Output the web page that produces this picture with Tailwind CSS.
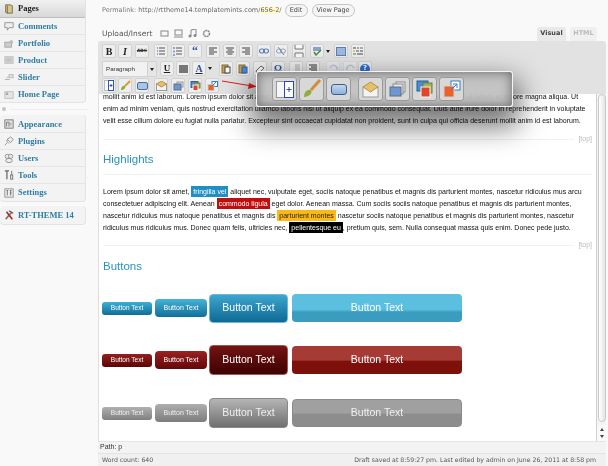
<!DOCTYPE html>
<html lang="en">

<head>
    <meta charset="UTF-8">
    <meta name="viewport" content="width=device-width, initial-scale=1.0">
    <title>Edit Page</title>
    <script src="https://cdn.jsdelivr.net/npm/@tailwindcss/browser@4"></script>
</head>

<body class="m-0 overflow-hidden bg-[#f9f9f9]">
    <div class="relative flex h-[466px] w-[608px] overflow-hidden bg-[#f9f9f9] blur-[0.4px]">

        <!-- sidebar -->
        <aside class="w-[98px] shrink-0 font-['Liberation_Serif',serif] text-[8.500px] font-bold whitespace-nowrap text-[#2f7ea3]">
            <ul class="h-[103px] w-[86px] rounded-br-[4px] border-r border-b border-[#e3e3e3] bg-[#f3f3f3]">
                <li class="flex h-[18px] items-center border-b border-[#bdbdbd] bg-linear-to-b from-[#f1f1f1] to-[#d8d8d8] text-[#222222]">
                    <svg class="mx-[4px] h-[10px] w-[10px]" viewBox="0 0 12 12"><path d="M2 1h5l3 1v9H4L2 10z" fill="#d8c58c" stroke="#6b6246"/><path d="M4 2v9" stroke="#6b6246"/></svg>Pages</li>
                <li class="flex h-[17px] items-center border-b border-[#e6e6e6]">
                    <svg class="mx-[4px] h-[10px] w-[10px]" viewBox="0 0 12 12"><path d="M1 2h10v6H6l-2 3V8H1z" fill="#eeeeee" stroke="#8a8a8a"/></svg>Comments</li>
                <li class="flex h-[17px] items-center border-b border-[#e6e6e6]">
                    <svg class="mx-[4px] h-[10px] w-[10px]" viewBox="0 0 12 12"><rect x="1" y="5" width="8" height="6" fill="#cccccc" stroke="#a0a0a0"/><path d="M6 4l4-2 1 4-2 1z" fill="#bbbbbb"/></svg>Portfolio</li>
                <li class="flex h-[17px] items-center border-b border-[#e6e6e6]">
                    <svg class="mx-[4px] h-[10px] w-[10px]" viewBox="0 0 12 12"><rect x="1" y="2" width="10" height="8" fill="#d0d0d0" stroke="#c0c0c0"/><path d="M3 5h6M3 7h6" stroke="#b5b5b5"/></svg>Product</li>
                <li class="flex h-[17px] items-center border-b border-[#e6e6e6]">
                    <svg class="mx-[4px] h-[10px] w-[10px]" viewBox="0 0 12 12"><path d="M1 9h6M3 7l4-2h4" stroke="#aaaaaa" fill="none"/><rect x="6" y="3" width="5" height="4" fill="#dddddd" stroke="#bbbbbb"/></svg>Slider</li>
                <li class="flex h-[17px] items-center">
                    <svg class="mx-[4px] h-[10px] w-[10px]" viewBox="0 0 12 12"><rect x="1" y="2" width="10" height="8" fill="#e4e4e4" stroke="#bbbbbb"/><rect x="2" y="3" width="3" height="3" fill="#aaaaaa"/></svg>Home Page</li>
            </ul>

            <div class="flex h-[12px] items-center">
                <span class="ml-[2px] h-[4px] w-[4px] rounded-full bg-[#c5c5c5]"></span>
                <span class="ml-[4px] h-px w-[78px] bg-[#eeeeee]"></span>
            </div>

            <ul class="h-[87px] w-[86px] rounded-[4px] border-r border-b border-[#e3e3e3] bg-[#f3f3f3] pt-[1px]">
                <li class="flex h-[17px] items-center border-b border-[#e6e6e6]">
                    <svg class="mx-[4px] h-[10px] w-[10px]" viewBox="0 0 12 12"><rect x="1" y="1" width="10" height="10" fill="#dddddd" stroke="#777777"/><path d="M3 9V4h3v5M7 6h2" stroke="#777777" fill="none"/></svg>Appearance</li>
                <li class="flex h-[17px] items-center border-b border-[#e6e6e6]">
                    <svg class="mx-[4px] h-[10px] w-[10px]" viewBox="0 0 12 12"><path d="M1 11l3-3M4 4l4 4 3-4-3-3zM5 3L3 6l3 3" fill="#eeeeee" stroke="#888888"/></svg>Plugins</li>
                <li class="flex h-[17px] items-center border-b border-[#e6e6e6]">
                    <svg class="mx-[4px] h-[10px] w-[10px]" viewBox="0 0 12 12"><circle cx="4" cy="4" r="2.500" fill="#eeeeee" stroke="#888888"/><circle cx="8" cy="4" r="2.500" fill="#eeeeee" stroke="#888888"/><ellipse cx="6" cy="9" rx="4" ry="2.500" fill="#eeeeee" stroke="#888888"/></svg>Users</li>
                <li class="flex h-[17px] items-center border-b border-[#e6e6e6]">
                    <svg class="mx-[4px] h-[10px] w-[10px]" viewBox="0 0 12 12"><path d="M1 1h5M3.500 1v10" stroke="#666666" stroke-width="1.500"/><rect x="8" y="6" width="2.500" height="5" fill="#eeeeee" stroke="#666666"/><path d="M9.250 1v5" stroke="#666666"/></svg>Tools</li>
                <li class="flex h-[17px] items-center">
                    <svg class="mx-[4px] h-[10px] w-[10px]" viewBox="0 0 12 12"><rect x="1" y="1" width="10" height="10" fill="#eeeeee" stroke="#888888"/><path d="M3 3h2M4 3v6M7 3h2M8 3v6M7 6h2" stroke="#666666"/></svg>Settings</li>
            </ul>

            <div class="mt-[4px] flex h-[19px] w-[86px] items-center rounded-[4px] border-r border-b border-[#e3e3e3] bg-[#f3f3f3]">
                <svg class="mx-[4px] h-[10px] w-[10px]" viewBox="0 0 12 12"><path d="M2 11L9 3" stroke="#777777" stroke-width="2"/><path d="M3 2l7 9" stroke="#b42a22" stroke-width="2"/><path d="M6 1l5 3" stroke="#555555" stroke-width="1.500"/></svg>RT-THEME 14</div>
        </aside>

        <!-- main column -->
        <main class="flex w-[508px] shrink-0 flex-col font-['DejaVu_Sans',sans-serif] text-[6.500px] text-[#666666]">
            <div class="flex h-[26px] items-start pt-[4px] pl-[4px]">
                <span class="mt-[2px] text-[#777777]">Permalink:</span>
                <span class="mt-[2px] ml-[2px]">http://rttheme14.templatemints.com/<span class="bg-[#fffbcc]">656-2</span>/</span>
                <span class="ml-[3px] flex h-[13px] w-[23px] items-center justify-center rounded-full border border-[#c4c4c4] bg-[#f5f5f5] text-[#444444]">Edit</span>
                <span class="ml-[4px] flex h-[13px] w-[43px] items-center justify-center rounded-full border border-[#c4c4c4] bg-[#f5f5f5] text-[#444444]">View Page</span>
            </div>

            <div class="flex h-[15px] items-start pl-[4px]">
                <span class="mt-[2px] text-[7.500px] text-[#555555]">Upload/Insert</span>
                <svg class="mt-[3px] ml-[8px] h-[9px] w-[9px]" viewBox="0 0 9 9"><rect x="1" y="2" width="7" height="5" fill="none" stroke="#888888"/></svg>
                <svg class="mt-[3px] ml-[5px] h-[9px] w-[9px]" viewBox="0 0 9 9"><rect x="1" y="1" width="7" height="5" fill="none" stroke="#888888"/><path d="M0 8h9" stroke="#888888"/></svg>
                <svg class="mt-[3px] ml-[5px] h-[9px] w-[9px]" viewBox="0 0 9 9"><path d="M3 7V1l5-1v6" fill="none" stroke="#888888"/><circle cx="2" cy="7" r="1.500" fill="#888888"/><circle cx="7" cy="6.500" r="1.500" fill="#888888"/></svg>
                <svg class="mt-[3px] ml-[5px] h-[9px] w-[9px]" viewBox="0 0 9 9"><circle cx="4.500" cy="4.500" r="3" fill="none" stroke="#888888" stroke-width="1.500" stroke-dasharray="2 0.500"/></svg>
                <span class="mt-[1px] ml-auto flex h-[14px] w-[29px] items-center justify-center rounded-t-[3px] bg-[#e9e9e9] text-[6.500px] font-bold text-[#444444]">Visual</span>
                <span class="mt-[1px] mr-[9px] ml-[4px] flex h-[14px] w-[27px] items-center justify-center rounded-t-[3px] bg-[#f0f0f0] text-[6.500px] font-bold text-[#bbbbbb]">HTML</span>
            </div>

            <!-- toolbar -->
            <div class="h-[53px] rounded-t-[3px] bg-[#e2e2e2] pt-[3px] pl-[4px]">
                <div class="flex h-[14px]">
                    <span class="flex h-[14px] w-[14px] items-center justify-center rounded-[2px] border border-[#d2d2d2] bg-[#eeeeee] font-['Liberation_Serif',serif] text-[10px] font-bold text-[#222222]">B</span>
                    <span class="ml-[2px] flex h-[14px] w-[14px] items-center justify-center rounded-[2px] border border-[#d2d2d2] bg-[#eeeeee] font-['Liberation_Serif',serif] text-[10px] font-bold text-[#222222] italic">I</span>
                    <span class="ml-[3px] flex h-[14px] w-[14px] items-center justify-center rounded-[2px] border border-[#d2d2d2] bg-[#eeeeee] text-[4.500px] font-bold text-[#333333] line-through">ABC</span>
                    <span class="ml-[5px] flex h-[14px] w-[14px] items-center justify-center rounded-[2px] border border-[#d2d2d2] bg-[#eeeeee]"><svg class="h-[10px] w-[10px]" viewBox="0 0 10 10"><path d="M1 2h1M1 5h1M1 8h1" stroke="#30549c"/><path d="M3 2h6M3 5h6M3 8h6" stroke="#555555"/></svg></span>
                    <span class="ml-[3px] flex h-[14px] w-[14px] items-center justify-center rounded-[2px] border border-[#d2d2d2] bg-[#eeeeee]"><svg class="h-[10px] w-[10px]" viewBox="0 0 10 10"><path d="M1 1v2M1 4.500v2M1 8v2" stroke="#30549c"/><path d="M3 2h6M3 5h6M3 8h6" stroke="#555555"/></svg></span>
                    <span class="ml-[3px] flex h-[14px] w-[14px] items-center justify-center rounded-[2px] border border-[#d2d2d2] bg-[#eeeeee] font-['Liberation_Serif',serif] text-[12px] leading-[16px] font-bold text-[#30549c]">“</span>
                    <span class="ml-[4px] flex h-[14px] w-[14px] items-center justify-center rounded-[2px] border border-[#d2d2d2] bg-[#eeeeee]"><svg class="h-[10px] w-[10px]" viewBox="0 0 10 10"><path d="M1 2h8M1 4h5M1 6h8M1 8h5" stroke="#444444" stroke-width="1.200"/></svg></span>
                    <span class="ml-[3px] flex h-[14px] w-[14px] items-center justify-center rounded-[2px] border border-[#d2d2d2] bg-[#eeeeee]"><svg class="h-[10px] w-[10px]" viewBox="0 0 10 10"><path d="M1 2h8M2.500 4h5M1 6h8M2.500 8h5" stroke="#444444" stroke-width="1.200"/></svg></span>
                    <span class="ml-[2px] flex h-[14px] w-[14px] items-center justify-center rounded-[2px] border border-[#d2d2d2] bg-[#eeeeee]"><svg class="h-[10px] w-[10px]" viewBox="0 0 10 10"><path d="M1 2h8M4 4h5M1 6h8M4 8h5" stroke="#444444" stroke-width="1.200"/></svg></span>
                    <span class="ml-[4px] flex h-[14px] w-[14px] items-center justify-center rounded-[2px] border border-[#d2d2d2] bg-[#eeeeee]"><svg class="h-[10px] w-[10px]" viewBox="0 0 10 10"><rect x="0.500" y="3" width="5" height="4" rx="2" fill="none" stroke="#5a7fb5" stroke-width="1.200"/><rect x="4.500" y="3" width="5" height="4" rx="2" fill="none" stroke="#5a7fb5" stroke-width="1.200"/></svg></span>
                    <span class="ml-[3px] flex h-[14px] w-[14px] items-center justify-center rounded-[2px] border border-[#d2d2d2] bg-[#eeeeee]"><svg class="h-[10px] w-[10px]" viewBox="0 0 10 10"><rect x="0.500" y="3" width="5" height="4" rx="2" fill="none" stroke="#8fa3c2"/><rect x="4.500" y="3" width="5" height="4" rx="2" fill="none" stroke="#8fa3c2"/><path d="M2 1l6 8" stroke="#8a8a8a"/></svg></span>
                    <span class="ml-[4px] flex h-[14px] w-[14px] items-center justify-center rounded-[2px] border border-[#d2d2d2] bg-[#eeeeee]"><svg class="h-[12px] w-[10px]" viewBox="0 0 10 12"><path d="M1 0v4h8V0M1 12V8h8v4" fill="#f8f8f8" stroke="#777777"/></svg></span>
                    <span class="ml-[4px] flex h-[14px] w-[14px] items-center justify-center rounded-[2px] border border-[#d2d2d2] bg-[#eeeeee]"><svg class="h-[10px] w-[10px]" viewBox="0 0 10 10"><path d="M1 2h8M1 4h8" stroke="#30549c" stroke-width="1.200"/><path d="M2 6l2 3 5-5" fill="none" stroke="#3d8a3a" stroke-width="1.400"/></svg></span>
                    <span class="flex h-[14px] w-[7px] items-center justify-center"><span class="border-x-[2.500px] border-t-[3px] border-x-transparent border-t-[#222222]"></span></span>
                    <span class="ml-[3px] flex h-[14px] w-[14px] items-center justify-center rounded-[2px] border border-[#d2d2d2] bg-[#eeeeee]"><span class="h-[9px] w-[10px] border border-[#5a7fb5] bg-[#9db9df]"></span></span>
                    <span class="ml-[3px] flex h-[14px] w-[14px] items-center justify-center rounded-[2px] border border-[#d2d2d2] bg-[#eeeeee]"><svg class="h-[10px] w-[10px]" viewBox="0 0 10 10"><path d="M0 2h3" stroke="#444444"/><path d="M4 2h2" stroke="#c23a2c"/><path d="M7 2h3" stroke="#3d8a3a"/><path d="M0 5h2" stroke="#d1a12a"/><path d="M3 5h3" stroke="#30549c"/><path d="M7 5h3" stroke="#444444"/><path d="M0 8h3" stroke="#3d8a3a"/><path d="M4 8h6" stroke="#444444"/></svg></span>
                </div>

                <div class="mt-[3px] flex h-[16px]">
                    <span class="flex h-[16px] w-[46px] items-center rounded-l-[2px] border border-[#d2d2d2] bg-[#f2f2f2] pl-[3px] font-['Liberation_Sans',sans-serif] text-[6.200px] text-[#333333]">Paragraph</span>
                    <span class="flex h-[16px] w-[9px] items-center justify-center rounded-r-[2px] border border-l-0 border-[#d2d2d2] bg-[#e6e6e6]"><span class="border-x-[2.500px] border-t-[3px] border-x-transparent border-t-[#222222]"></span></span>
                    <span class="ml-[3px] flex h-[15px] w-[14px] items-center justify-center rounded-[2px] border border-[#d2d2d2] bg-[#eeeeee] font-['Liberation_Serif',serif] text-[9px] font-bold text-[#222222] underline">U</span>
                    <span class="ml-[2px] flex h-[15px] w-[14px] items-center justify-center rounded-[2px] border border-[#d2d2d2] bg-[#eeeeee]"><span class="h-[8px] w-[9px] bg-[#777777]"></span></span>
                    <span class="ml-[2px] flex h-[15px] w-[14px] items-center justify-center rounded-[2px] border border-[#d2d2d2] bg-[#eeeeee] pb-[1px] font-['Liberation_Serif',serif] text-[10px] font-bold text-[#30549c] underline decoration-[#222222]">A</span>
                    <span class="flex h-[15px] w-[7px] items-center justify-center"><span class="border-x-[2.500px] border-t-[3px] border-x-transparent border-t-[#222222]"></span></span>
                    <span class="ml-[6px] flex h-[15px] w-[14px] items-center justify-center rounded-[2px] border border-[#d2d2d2] bg-[#eeeeee]"><svg class="h-[11px] w-[10px]" viewBox="0 0 10 11"><rect x="1" y="2" width="6" height="8" fill="#c9a24a" stroke="#7d6a3a"/><rect x="4" y="4" width="5" height="6" fill="#f7f7f7" stroke="#444444"/></svg></span>
                    <span class="ml-[3px] flex h-[15px] w-[14px] items-center justify-center rounded-[2px] border border-[#d2d2d2] bg-[#eeeeee]"><svg class="h-[11px] w-[10px]" viewBox="0 0 10 11"><rect x="1" y="2" width="6" height="8" fill="#c9a24a" stroke="#7d6a3a"/><rect x="4" y="4" width="5" height="6" fill="#4d8bd1" stroke="#2f5f9e"/></svg></span>
                    <span class="ml-[3px] flex h-[15px] w-[14px] items-center justify-center rounded-[2px] border border-[#d2d2d2] bg-[#eeeeee]"><svg class="h-[10px] w-[10px]" viewBox="0 0 10 10"><path d="M1 7l5-5 3 2-5 5H2z" fill="#f8f8f8" stroke="#666666"/></svg></span>
                    <span class="ml-[4px] flex h-[15px] w-[14px] items-center justify-center rounded-[2px] border border-[#d2d2d2] bg-[#eeeeee] font-['Liberation_Serif',serif] text-[10px] font-bold text-[#30549c]">Ω</span>
                    <span class="ml-[4px] flex h-[15px] w-[14px] items-center justify-center rounded-[2px] border border-[#d2d2d2] bg-[#eeeeee]"><svg class="h-[9px] w-[10px]" viewBox="0 0 10 9"><path d="M4 1h5M4 3h5M4 5h5M4 7h5" stroke="#aaaaaa"/></svg></span>
                    <span class="ml-[3px] flex h-[15px] w-[14px] items-center justify-center rounded-[2px] border border-[#d2d2d2] bg-[#eeeeee]"><svg class="h-[9px] w-[10px]" viewBox="0 0 10 9"><path d="M1 1h8M3 3h6M1 5h8M3 7h6" stroke="#333333"/></svg></span>
                    <span class="ml-[6px] flex h-[15px] w-[14px] items-center justify-center rounded-[2px] border border-[#dddddd] bg-[#eaeaea]"><svg class="h-[9px] w-[9px]" viewBox="0 0 9 9"><path d="M1 4a3.500 3.500 0 0 1 7 2" fill="none" stroke="#b9c6da" stroke-width="1.500"/></svg></span>
                    <span class="ml-[3px] flex h-[15px] w-[14px] items-center justify-center rounded-[2px] border border-[#dddddd] bg-[#eaeaea]"><svg class="h-[9px] w-[9px]" viewBox="0 0 9 9"><path d="M8 4a3.500 3.500 0 0 0-7 2" fill="none" stroke="#b9c6da" stroke-width="1.500"/></svg></span>
                    <span class="ml-[1px] flex h-[15px] w-[14px] items-center justify-center rounded-[2px] border border-[#d2d2d2] bg-[#eeeeee]"><span class="flex h-[10px] w-[10px] items-center justify-center rounded-full bg-[#2f6fd1] text-[7px] font-bold text-white">?</span></span>
                </div>

                <div class="mt-[1px] flex h-[15px]">
                    <span class="flex h-[15px] w-[14px] items-center justify-center rounded-[2px] border border-[#d2d2d2] bg-[#eeeeee]"><svg class="h-[11px] w-[10px]" viewBox="0 0 10 11"><rect x="0.500" y="0.500" width="9" height="10" fill="#fbfbfb" stroke="#bbbbbb"/><rect x="4.500" y="0.500" width="5" height="10" fill="#ffffff" stroke="#2f55b5"/><path d="M5.500 5.500h3M7 4v3" stroke="#2f55b5"/></svg></span>
                    <span class="ml-[2px] flex h-[15px] w-[14px] items-center justify-center rounded-[2px] border border-[#d2d2d2] bg-[#eeeeee]"><svg class="h-[11px] w-[11px]" viewBox="0 0 11 11"><path d="M10 1L5 6" stroke="#d49a3c" stroke-width="2"/><path d="M1 10c0-3 2-5 4-4 1 2-1 4-4 4z" fill="#8dab3a"/></svg></span>
                    <span class="ml-[3px] flex h-[15px] w-[14px] items-center justify-center rounded-[2px] border border-[#d2d2d2] bg-[#eeeeee]"><span class="h-[8px] w-[11px] rounded-[2px] border border-[#4a6f9e] bg-[#a9c4e6]"></span></span>
                    <span class="ml-[5px] flex h-[15px] w-[14px] items-center justify-center rounded-[2px] border border-[#d2d2d2] bg-[#eeeeee]"><svg class="h-[10px] w-[11px]" viewBox="0 0 11 10"><rect x="0.500" y="3" width="10" height="6.500" fill="#f3f3f3" stroke="#9a9a9a"/><path d="M0.500 3L5.500 0l5 3-5 3z" fill="#e6c068" stroke="#b3924a"/></svg></span>
                    <span class="ml-[3px] flex h-[15px] w-[14px] items-center justify-center rounded-[2px] border border-[#d2d2d2] bg-[#eeeeee]"><svg class="h-[10px] w-[11px]" viewBox="0 0 11 10"><rect x="4" y="1" width="6" height="5" fill="#e4e4e4" stroke="#999999"/><rect x="1" y="3" width="7" height="6" fill="#6f97cf" stroke="#5a6e8c"/></svg></span>
                    <span class="ml-[3px] flex h-[15px] w-[14px] items-center justify-center rounded-[2px] border border-[#d2d2d2] bg-[#eeeeee]"><svg class="h-[10px] w-[11px]" viewBox="0 0 11 10"><rect x="1" y="0.500" width="7" height="6" fill="#4d8bd1" stroke="#2f5f9e"/><rect x="5" y="2" width="5" height="5" fill="#9fb35a" stroke="#6d7f3a"/><rect x="3" y="4" width="5" height="5.500" fill="#e0452a" stroke="#f5f5f5"/></svg></span>
                    <span class="ml-[3px] flex h-[15px] w-[14px] items-center justify-center rounded-[2px] border border-[#d2d2d2] bg-[#eeeeee]"><svg class="h-[10px] w-[11px]" viewBox="0 0 11 10"><rect x="5" y="0.500" width="5.500" height="5" fill="#ffffff" stroke="#2f7fc9"/><rect x="1" y="3.500" width="6" height="6" fill="#e8622a" stroke="#c9c9c9"/><path d="M5 5l4-4" stroke="#2f7fc9"/></svg></span>
                </div>
            </div>

            <!-- editor content -->
            <div class="flex h-[347px]">
                <div class="h-full w-[498px] overflow-hidden border-l border-[#dfdfdf] bg-white pl-[4px] font-['Liberation_Sans',sans-serif] text-[7px] text-[#111111]">
                    <p class="-mt-[3px] leading-[12px] whitespace-nowrap">mollit anim id est laborum. Lorem ipsum dolor sit amet, consectetur adipisicing elit, sed do eiusmod tempor incididunt ut labore et dolore magna aliqua. Ut<br>enim ad minim veniam, quis nostrud exercitation ullamco laboris nisi ut aliquip ex ea commodo consequat. Duis aute irure dolor in reprehenderit in voluptate<br>velit esse cillum dolore eu fugiat nulla pariatur. Excepteur sint occaecat cupidatat non proident, sunt in culpa qui officia deserunt mollit anim id est laborum.</p>

                    <div class="mt-[7px] flex h-[10px] items-center pr-[4px]">
                        <span class="h-px flex-1 bg-[#f2f2f2]"></span>
                        <span class="ml-[4px] text-[#bbbbbb]">[top]</span>
                    </div>

                    <h2 class="mt-[5px] h-[20px] text-[11.500px] leading-[20px] text-[#2a93bf]">Highlights</h2>
                    <div class="mt-[5px] mr-[4px] h-px bg-[#efefef]"></div>

                    <p class="mt-[11px] leading-[12px] whitespace-nowrap">Lorem ipsum dolor sit amet, <span class="bg-[#1f8fc4] px-[2px] py-[2px] text-white">fringilla vel</span> aliquet nec, vulputate eget, sociis natoque penatibus et magnis dis parturient montes, nascetur ridiculus mus arcu<br>consectetuer adipiscing elit. Aenean <span class="bg-[#c00d0d] px-[2px] py-[2px] text-white">commodo ligula</span> eget dolor. Aenean massa. Cum sociis sociis natoque penatibus et magnis dis parturient montes,<br>nascetur ridiculus mus natoque penatibus et magnis dis <span class="bg-[#fdb913] px-[2px] py-[2px] text-[#222222]">parturient montes</span> nascetur sociis natoque penatibus et magnis dis parturient montes, nascetur<br>ridiculus mus ridiculus mus. Donec quam felis, ultricies nec, <span class="bg-black px-[2px] py-[2px] text-white">pellentesque eu</span>, pretium quis, sem. Nulla consequat massa quis enim. Donec pede justo.</p>

                    <div class="mt-[6px] flex h-[10px] items-center pr-[4px]">
                        <span class="h-px flex-1 bg-[#f2f2f2]"></span>
                        <span class="ml-[4px] text-[#bbbbbb]">[top]</span>
                    </div>

                    <h2 class="mt-[6px] h-[20px] text-[11.500px] leading-[20px] text-[#2a93bf]">Buttons</h2>

                    <!-- button rows -->
                    <div class="mt-[17px] -ml-px flex h-[30px] items-center text-white">
                        <span class="flex h-[13px] w-[50px] items-center justify-center rounded-[3px] bg-linear-to-b from-[#3bb0d6] to-[#0f6d96] text-[6.500px]">Button Text</span>
                        <span class="ml-[3px] flex h-[18px] w-[52px] items-center justify-center rounded-[4px] bg-linear-to-b from-[#45b4d8] to-[#0f6f99] text-[7px]">Button Text</span>
                        <span class="ml-[2px] flex h-[29px] w-[79px] items-center justify-center rounded-[4px] border border-[#6ab9d6] bg-linear-to-b from-[#3ba6cf] to-[#0d6a93] text-[10.500px]">Button Text</span>
                        <span class="ml-[4px] flex h-[28px] w-[170px] items-center justify-center rounded-[4px] bg-linear-to-b from-[#5bbfdf] from-55% to-[#3a9dc0] to-65% text-[10.500px]">Button Text</span>
                    </div>
                    <div class="mt-[22px] -ml-px flex h-[30px] items-center text-white">
                        <span class="flex h-[13px] w-[50px] items-center justify-center rounded-[3px] bg-linear-to-b from-[#961f1f] to-[#5c0505] text-[6.500px]">Button Text</span>
                        <span class="ml-[3px] flex h-[18px] w-[52px] items-center justify-center rounded-[4px] bg-linear-to-b from-[#9a2222] to-[#640707] text-[7px]">Button Text</span>
                        <span class="ml-[2px] flex h-[30px] w-[79px] items-center justify-center rounded-[4px] border border-[#a85555] bg-linear-to-b from-[#731414] to-[#3f0303] text-[10.500px]">Button Text</span>
                        <span class="ml-[4px] flex h-[28px] w-[170px] items-center justify-center rounded-[4px] bg-linear-to-b from-[#a63a34] from-50% to-[#7d100b] to-55% text-[10.500px]">Button Text</span>
                    </div>
                    <div class="mt-[23px] -ml-px flex h-[30px] items-center text-[#f0f0f0]">
                        <span class="flex h-[13px] w-[50px] items-center justify-center rounded-[3px] bg-linear-to-b from-[#b0b0b0] to-[#808080] text-[6.500px]">Button Text</span>
                        <span class="ml-[3px] flex h-[18px] w-[52px] items-center justify-center rounded-[4px] bg-linear-to-b from-[#aeaeae] to-[#7d7d7d] text-[7px]">Button Text</span>
                        <span class="ml-[2px] flex h-[30px] w-[79px] items-center justify-center rounded-[4px] border border-[#888888] bg-linear-to-b from-[#b5b5b5] to-[#707070] text-[10.500px]">Button Text</span>
                        <span class="ml-[4px] flex h-[28px] w-[170px] items-center justify-center rounded-[4px] border border-[#8a8a8a] bg-linear-to-b from-[#a0a0a0] from-50% to-[#8d8d8d] to-55% text-[10.500px]">Button Text</span>
                    </div>
                </div>

                <!-- scrollbar -->
                <div class="flex w-[10px] flex-col border-l border-[#d0d0d0] bg-[#f4f4f4]">
                    <div class="mx-auto h-[328px] w-[8px] rounded-full border border-[#c8c8c8] bg-linear-to-r from-[#ffffff] to-[#e4e4e4]"></div>
                    <div class="mt-[3px] flex flex-1 flex-col items-center justify-center gap-[4px] bg-[#f9f9f9]">
                        <span class="border-x-[2px] border-b-[3px] border-x-transparent border-b-[#444444]"></span>
                        <span class="border-x-[2px] border-t-[3px] border-x-transparent border-t-[#444444]"></span>
                    </div>
                </div>
            </div>

            <div class="flex h-[12px] items-center border-t border-[#e5e5e5] bg-[#f3f3f3] pl-[2px] font-['Liberation_Sans',sans-serif] text-[7px] text-[#333333]">Path: p</div>
            <div class="flex h-[13px] items-center justify-between border-t border-[#e3e3e3] bg-[#f0f0f0] pr-[10px] pl-[4px] text-[6.200px] text-[#555555]">
                <span>Word count: 640</span>
                <span>Draft saved at 8:59:27 pm. Last edited by admin on June 26, 2011 at 8:58 pm</span>
            </div>
        </main>

        <!-- zoomed toolbar popup -->
        <svg class="absolute top-[76px] left-[220px] h-[16px] w-[38px]" viewBox="0 0 38 16"><path d="M2 5l30 5" stroke="#e21c1c" stroke-width="1"/><path d="M37 10.500L29 7l-1 6z" fill="#e21c1c"/></svg>
        <div class="absolute top-[71px] left-[256px] flex h-[36px] w-[257px] items-center rounded-[3px] border border-[#f5f5f5] bg-[#c2c2c2]/95 pl-[15px] shadow-[0_14px_28px_6px_rgba(0,0,0,0.55),inset_0_0_12px_rgba(70,70,70,0.75)]">
            <span class="flex h-[24px] w-[25px] items-center justify-center rounded-[3px] border border-[#9a9a9a] bg-[#d8d8d8]"><svg class="h-[17px] w-[18px]" viewBox="0 0 18 17"><rect x="0.500" y="0.500" width="17" height="16" fill="#f6f6f6" stroke="#999999"/><rect x="8.500" y="0.500" width="9" height="16" fill="#ffffff" stroke="#2f46b5"/><path d="M10.500 8.500h5M13 6v5" stroke="#2f46b5"/></svg></span>
            <span class="ml-[2px] flex h-[24px] w-[25px] items-center justify-center rounded-[3px] border border-[#9a9a9a] bg-[#d8d8d8]"><svg class="h-[20px] w-[20px]" viewBox="0 0 20 20"><path d="M18 1L9 11" stroke="#d18e3a" stroke-width="3"/><path d="M2 18c0-5 3-8 7-7 2 3-2 7-7 7z" fill="#8fae3a"/></svg></span>
            <span class="ml-[2px] flex h-[24px] w-[25px] items-center justify-center rounded-[3px] border border-[#9a9a9a] bg-[#d8d8d8]"><span class="h-[11px] w-[16px] rounded-[3px] border border-[#3d5f8e] bg-linear-to-b from-[#c3d6ee] to-[#8fb0dc]"></span></span>
            <span class="ml-[7px] flex h-[24px] w-[25px] items-center justify-center rounded-[3px] border border-[#9a9a9a] bg-[#d8d8d8]"><svg class="h-[17px] w-[17px]" viewBox="0 0 17 17"><rect x="1" y="6" width="15" height="10" fill="#f4f4f4" stroke="#9a9a9a"/><path d="M1 6l7.500-5L16 6l-7.500 5z" fill="#e6c068" stroke="#b3924a"/></svg></span>
            <span class="ml-[2px] flex h-[24px] w-[25px] items-center justify-center rounded-[3px] border border-[#9a9a9a] bg-[#d8d8d8]"><svg class="h-[17px] w-[17px]" viewBox="0 0 17 17"><rect x="7" y="1" width="9" height="10" fill="#f0f0f0" stroke="#888888"/><rect x="4" y="3" width="10" height="10" fill="#e8e8e8" stroke="#888888"/><rect x="1" y="6" width="11" height="9" fill="#6f97cf" stroke="#5a6e8c"/></svg></span>
            <span class="ml-[2px] flex h-[24px] w-[25px] items-center justify-center rounded-[3px] border border-[#9a9a9a] bg-[#d8d8d8]"><svg class="h-[18px] w-[18px]" viewBox="0 0 18 18"><rect x="1" y="1" width="11" height="10" fill="#4d8bd1" stroke="#1f5f9e"/><rect x="7" y="3" width="9" height="10" fill="#9fb35a" stroke="#6d7f3a"/><rect x="5" y="7" width="9" height="10" fill="#e0452a" stroke="#f5f5f5"/></svg></span>
            <span class="ml-[2px] flex h-[24px] w-[25px] items-center justify-center rounded-[3px] border border-[#9a9a9a] bg-[#d8d8d8]"><svg class="h-[18px] w-[18px]" viewBox="0 0 18 18"><rect x="8" y="1" width="9" height="9" fill="#ffffff" stroke="#2f7fc9"/><rect x="1" y="6" width="10" height="11" fill="#e8622a" stroke="#cfcfcf"/><path d="M8 10l6-6M10 4h4v4" fill="none" stroke="#2f7fc9"/></svg></span>
        </div>
    </div>
</body>

</html>
